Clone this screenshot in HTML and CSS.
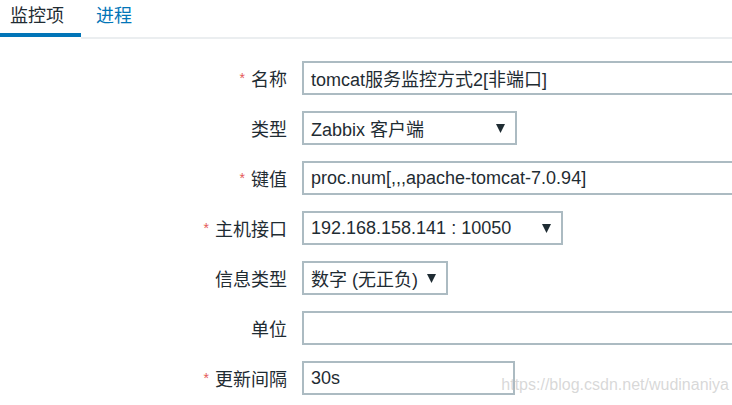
FILE: index.html
```html
<!DOCTYPE html>
<html lang="zh">
<head>
<meta charset="utf-8">
<title>监控项</title>
<link rel="stylesheet" href="styles.css">
</head>
<body>
<div class="page">
  <nav class="tabs">
    <a class="tab tab-active">监控项</a>
    <a class="tab">进程</a>
  </nav>
  <div class="form">
    <label class="label"><span class="req">*</span>名称</label>
    <div class="field w-full">tomcat服务监控方式2[非端口]</div>

    <label class="label">类型</label>
    <div class="field select w-type"><span>Zabbix 客户端</span><svg class="arrow" viewBox="0 0 8 8"><path d="M0 0H8L4 8Z"/></svg></div>

    <label class="label"><span class="req">*</span>键值</label>
    <div class="field w-full">proc.num[,,,apache-tomcat-7.0.94]</div>

    <label class="label"><span class="req">*</span>主机接口</label>
    <div class="field select w-iface"><span>192.168.158.141 : 10050</span><svg class="arrow" viewBox="0 0 8 8"><path d="M0 0H8L4 8Z"/></svg></div>

    <label class="label">信息类型</label>
    <div class="field select w-info"><span>数字 (无正负)</span><svg class="arrow" viewBox="0 0 8 8"><path d="M0 0H8L4 8Z"/></svg></div>

    <label class="label">单位</label>
    <div class="field w-full"></div>

    <label class="label"><span class="req">*</span>更新间隔</label>
    <div class="field w-delay">30s</div>
  </div>
  <div class="watermark">https://blog.csdn.net/wudinaniya</div>
</div>
</body>
</html>
```

FILE: styles.css
```css
html, body {
  margin: 0;
  padding: 0;
  background: #ffffff;
  overflow: hidden;
}
body {
  font-family: "Liberation Sans", Arial, "Noto Sans CJK SC", sans-serif;
  color: #1f2c33;
  width: 732px;
  height: 405px;
}
.page {
  position: relative;
  width: 732px;
  height: 405px;
  overflow: hidden;
}
.tabs {
  display: flex;
  height: 37px;
  border-bottom: 2px solid #ebeef0;
}
.tab {
  display: block;
  font-size: 18px;
  line-height: 26px;
  padding-top: 1px;
  height: 39px;
  margin-bottom: -2px;
  box-sizing: border-box;
  color: #0275b8;
  font-family: "Noto Sans CJK SC", "Liberation Sans", sans-serif;
}
.tab-active {
  width: 81px;
  padding-left: 10px;
  color: #1f2c33;
  background: linear-gradient(to top, #ffffff 0, #ffffff 2px, #0275b8 2px, #0275b8 6px, transparent 6px);
}
.tab + .tab {
  padding-left: 15px;
}
.form {
  display: grid;
  grid-template-columns: 287px auto;
  column-gap: 15px;
  row-gap: 16px;
  padding-top: 22px;
  justify-items: start;
}
.label {
  justify-self: end;
  align-self: center;
  font-size: 18px;
  font-family: "Noto Sans CJK SC", "Liberation Sans", sans-serif;
  line-height: 24px;
  white-space: nowrap;
}
.req {
  color: #e45959;
  font-size: 14px;
  font-family: "Liberation Sans", sans-serif;
  margin-right: 6px;
  vertical-align: 3px;
}
.field {
  box-sizing: border-box;
  height: 34px;
  border: 2px solid #acbbc2;
  padding: 0 7px;
  display: flex;
  align-items: center;
  font-size: 18px;
  white-space: nowrap;
  background: #ffffff;
}
.select {
  justify-content: space-between;
  padding-right: 10px;
}
.arrow {
  width: 9px;
  height: 9px;
  fill: #1f2c33;
}
.w-full { width: 500px; }
.w-type { width: 215px; }
.w-iface { width: 261px; }
.w-info { width: 146px; }
.w-delay { width: 213px; }
.watermark {
  position: absolute;
  right: 3px;
  top: 376px;
  font-size: 16px;
  color: rgba(190, 190, 190, 0.6);
  white-space: nowrap;
}
```
